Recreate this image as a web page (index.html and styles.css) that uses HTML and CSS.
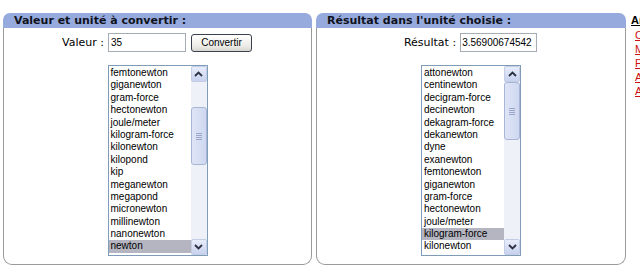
FILE: index.html
```html
<!DOCTYPE html>
<html lang="fr">
<head>
  <meta charset="UTF-8">
  <title>Convertisseur de force</title>
  <link rel="stylesheet" href="styles.css">
</head>
<body>
  <div class="page">

    <div class="panel panel-source">
      <div class="panel-title">Valeur et unité à convertir :</div>
      <div class="panel-body">
        <div class="field-row">
          <label class="field-label" for="valeur">Valeur :</label>
          <input class="text-input input-valeur" id="valeur" value="35">
          <button class="btn-convertir">Convertir</button>
        </div>
        <div class="listbox">
          <ul class="list-items">
            <li>femtonewton</li>
            <li>giganewton</li>
            <li>gram-force</li>
            <li>hectonewton</li>
            <li>joule/meter</li>
            <li>kilogram-force</li>
            <li>kilonewton</li>
            <li>kilopond</li>
            <li>kip</li>
            <li>meganewton</li>
            <li>megapond</li>
            <li>micronewton</li>
            <li>millinewton</li>
            <li>nanonewton</li>
            <li class="selected">newton</li>
          </ul>
          <div class="scrollbar">
            <div class="scroll-btn">
              <svg width="9" height="6" viewBox="0 0 9 6"><path d="M1 5 L4.5 1.5 L8 5" fill="none" stroke="#2b3140" stroke-width="1.8"/></svg>
            </div>
            <div class="scroll-track">
              <div class="scroll-thumb thumb-source"><span class="grip"></span></div>
            </div>
            <div class="scroll-btn">
              <svg width="9" height="6" viewBox="0 0 9 6"><path d="M1 1 L4.5 4.5 L8 1" fill="none" stroke="#2b3140" stroke-width="1.8"/></svg>
            </div>
          </div>
        </div>
      </div>
    </div>

    <div class="panel panel-result">
      <div class="panel-title">Résultat dans l'unité choisie :</div>
      <div class="panel-body">
        <div class="field-row">
          <label class="field-label" for="resultat">Résultat :</label>
          <input class="text-input input-resultat" id="resultat" value="3.56900674542">
        </div>
        <div class="listbox">
          <ul class="list-items">
            <li>attonewton</li>
            <li>centinewton</li>
            <li>decigram-force</li>
            <li>decinewton</li>
            <li>dekagram-force</li>
            <li>dekanewton</li>
            <li>dyne</li>
            <li>exanewton</li>
            <li>femtonewton</li>
            <li>giganewton</li>
            <li>gram-force</li>
            <li>hectonewton</li>
            <li>joule/meter</li>
            <li class="selected">kilogram-force</li>
            <li>kilonewton</li>
          </ul>
          <div class="scrollbar">
            <div class="scroll-btn">
              <svg width="9" height="6" viewBox="0 0 9 6"><path d="M1 5 L4.5 1.5 L8 5" fill="none" stroke="#2b3140" stroke-width="1.8"/></svg>
            </div>
            <div class="scroll-track">
              <div class="scroll-thumb thumb-result"><span class="grip"></span></div>
            </div>
            <div class="scroll-btn">
              <svg width="9" height="6" viewBox="0 0 9 6"><path d="M1 1 L4.5 4.5 L8 1" fill="none" stroke="#2b3140" stroke-width="1.8"/></svg>
            </div>
          </div>
        </div>
      </div>
    </div>

    <div class="side-links">
      <div class="side-title">Articles</div>
      <a href="#">Convertisseur</a>
      <a href="#">Masse</a>
      <a href="#">Pression</a>
      <a href="#">Accélération</a>
      <a href="#">Aire</a>
    </div>

  </div>
</body>
</html>
```

FILE: styles.css
```css
body {
  margin: 0;
  background-color: #fff;
  color: #000;
  font-family: "DejaVu Sans", Verdana, sans-serif;
  overflow: hidden;
}

.page {
  display: flex;
  align-items: flex-start;
  gap: 4px;
  padding: 13px 0 0 3px;
  width: 800px;
}

.panel {
  display: flex;
  flex-direction: column;
}

.panel-source {
  width: 309px;
}

.panel-result {
  width: 310px;
}

.panel-title {
  height: 15px;
  line-height: 15px;
  padding-left: 11px;
  background-color: #96aade;
  border-radius: 7px 7px 0 0;
  font-size: 11px;
  font-weight: bold;
  color: #10131c;
}

.panel-body {
  display: flex;
  flex-direction: column;
  align-items: center;
  height: 231px;
  border: 1px solid #9a9a9a;
  border-top: none;
  border-radius: 0 0 9px 9px;
  padding-top: 5px;
}

.field-row {
  display: flex;
  align-items: center;
  height: 19px;
  margin-left: -1px;
}

.field-label {
  font-size: 11px;
  margin-right: 4px;
}

.text-input {
  box-sizing: border-box;
  height: 19px;
  border: 1px solid #a5acb5;
  padding: 0 2px;
  font-family: "Liberation Sans", Arial, sans-serif;
  font-size: 10px;
  color: #000;
  outline: none;
}

.input-valeur {
  width: 78px;
}

.input-resultat {
  width: 77px;
  padding: 0 1px;
}

.btn-convertir {
  box-sizing: border-box;
  height: 18px;
  width: 61px;
  margin-left: 5px;
  padding: 0;
  border: 1px solid #39414f;
  border-radius: 3px;
  background: linear-gradient(#ffffff, #ecebe6 70%, #d8d6ce);
  font-family: "Liberation Sans", Arial, sans-serif;
  font-size: 10px;
  color: #000;
}

.listbox {
  display: flex;
  box-sizing: border-box;
  width: 100px;
  height: 191px;
  margin-top: 13px;
  border: 1px solid #7f9db9;
  background-color: #fff;
}

.list-items {
  flex: 1;
  list-style: none;
  margin: 0;
  padding: 1px 0 0 0;
  overflow: hidden;
  font-family: "Liberation Sans", Arial, sans-serif;
  font-size: 10px;
}

.list-items li {
  height: 12.4px;
  line-height: 12.4px;
  padding-left: 2px;
  white-space: nowrap;
}

.list-items li.selected {
  background-color: #b4b5c0;
}

.scrollbar {
  display: flex;
  flex-direction: column;
  width: 16px;
  background-color: #eff1f9;
}

.scroll-btn {
  display: flex;
  align-items: center;
  justify-content: center;
  box-sizing: border-box;
  height: 16px;
  border: 1px solid #c3cde3;
  border-radius: 2px;
  background: linear-gradient(#e8edfb, #c8d2ee);
}

.scroll-track {
  flex: 1;
  position: relative;
}

.scroll-thumb {
  position: absolute;
  left: 0;
  right: 0;
  height: 58px;
  box-sizing: border-box;
  display: flex;
  align-items: center;
  justify-content: center;
  border: 1px solid #a8b5d6;
  border-radius: 3px;
  background: linear-gradient(90deg, #dfe5f6, #cfd8f1);
}

.thumb-source {
  top: 25px;
}

.thumb-result {
  top: 0;
}

.grip {
  width: 6px;
  height: 7px;
  background: repeating-linear-gradient(#9aa6c6 0 1px, transparent 1px 2px);
}

.side-links {
  display: flex;
  flex-direction: column;
  padding-left: 1px;
  font-family: "Liberation Sans", Arial, sans-serif;
  font-size: 11px;
  line-height: 14px;
  white-space: nowrap;
}

.side-title {
  font-weight: bold;
  text-decoration: underline;
  margin-bottom: 1px;
}

.side-links a {
  color: #cc1111;
  padding-left: 4px;
}
```
